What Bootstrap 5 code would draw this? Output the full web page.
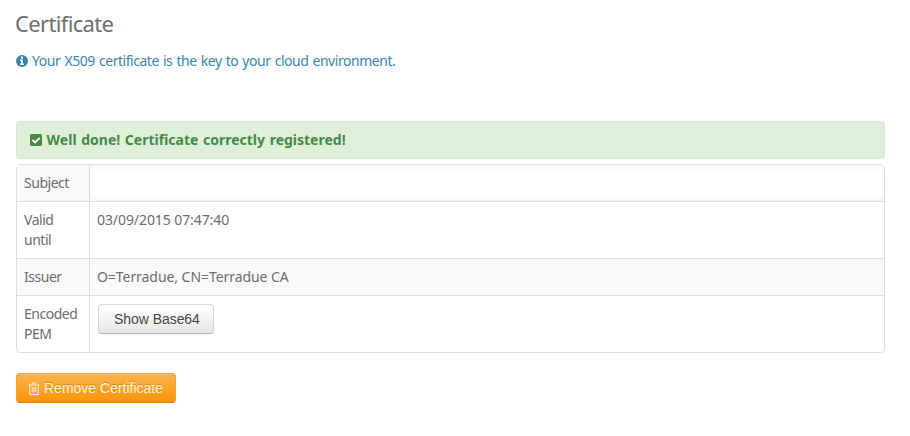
<!DOCTYPE html>
<html lang="en">
<head>
<meta charset="utf-8">
<meta name="viewport" content="width=device-width, initial-scale=1">
<title>Certificate</title>
<link href="https://cdn.jsdelivr.net/npm/bootstrap@5.3.0/dist/css/bootstrap.min.css" rel="stylesheet">
<style>
body{font:14px/20px "Noto Sans",sans-serif;color:#6c6c6c;background:#fff;overflow:hidden}
.page{width:869px;margin-left:16px;padding-top:8px}
.page h3{font-size:22px;line-height:30px;font-weight:400;color:#6e6e6e;letter-spacing:-.65px;margin-left:-1px}
.hint{color:#3a87ad;margin-top:13px;letter-spacing:-.46px;word-spacing:.9px}
.hint svg,.notice svg{width:12px;height:12px;flex:none}
.hint svg{margin-left:-.5px}
.hint span,.notice span{margin-left:.6px}
.notice{margin-top:50px;height:38px;padding:0 13px;background:#dff0d8;border:1px solid #d6e9c6;color:#468847;border-radius:4px;font-weight:700;word-spacing:1px}
.cert{margin-top:5px;border:1px solid #ddd;border-radius:4px;border-collapse:separate;border-spacing:0;table-layout:fixed;--bs-table-bg:transparent;color:inherit}
.cert>tbody>tr>*{padding:8px 7px;border:0;border-top:1px solid #ddd;font-weight:400;color:#6c6c6c;line-height:20px}
.cert>tbody>tr:first-child>*{border-top:0}
.cert>tbody>tr>td{border-left:1px solid #ddd;letter-spacing:-.08px}
.cert>tbody>tr>th{letter-spacing:-.48px}
.cert>tbody>tr>.issuer{letter-spacing:-.06px}
.cert th{width:72px}
.cert .shade>*{background:#f9f9f9}
.cert .redacted{background:linear-gradient(#fff,#fff) 1px 4px/calc(100% - 2px) 28px no-repeat #f9f9f9}
.btn-old{font:14px/20px "Liberation Sans",Arial,sans-serif;height:30px;border-radius:4px;box-shadow:inset 0 1px 0 rgba(255,255,255,.2),0 1px 2px rgba(0,0,0,.05)}
.btn-show{color:#444;margin-left:1px;padding:4px 13px 4px 15px;letter-spacing:-.05px;background:linear-gradient(#fff,#e6e6e6);border:1px solid #ccc;border-color:#dcdcdc #d4d4d4 #b3b3b3;text-shadow:0 1px 1px rgba(255,255,255,.75)}
.btn-remove{color:#fff3df;background:linear-gradient(#fbb450,#f89406);border:1px solid #f0a03c;border-bottom-color:#d68519;text-shadow:0 -1px 0 rgba(0,0,0,.2);margin-top:20px;padding:4px 12px 4px 11px}
.btn-remove svg{margin-right:4px}
</style>
</head>
<body>
<main class="page">
<h3 class="mb-0"><span>Certificate</span></h3>
<div class="hint d-flex align-items-center">
<svg viewBox="0 0 12 12" class="me-1"><circle cx="6" cy="6" r="6" fill="#3a87ad"/><path d="M5 1.500h2v2H5zM4 4.500h3v4h1V10H4V8.500h1V6H4z" fill="#fff"/></svg>
<span>Your X509 certificate is the key to your cloud environment.</span>
</div>
<div class="notice d-flex align-items-center">
<svg viewBox="0 0 12 12" class="me-1"><rect width="12" height="12" rx="2" fill="#468847"/><path d="M2.500 6l2.500 2.500L9.700 3.800" fill="none" stroke="#fff" stroke-width="1.900"/></svg>
<span>Well done! Certificate correctly registered!</span>
</div>
<table class="table cert mb-0">
<tbody>
<tr class="shade"><th scope="row">Subject</th><td class="redacted"></td></tr>
<tr><th scope="row">Valid until</th><td><span>03/09/2015 07:47:40</span></td></tr>
<tr class="shade"><th scope="row">Issuer</th><td class="issuer"><span>O=Terradue, CN=Terradue CA</span></td></tr>
<tr><th scope="row">Encoded PEM</th><td><button type="button" class="btn btn-old btn-show d-block">Show Base64</button></td></tr>
</tbody>
</table>
<button type="button" class="btn btn-old btn-remove d-flex align-items-center">
<svg width="12" height="13" viewBox="0 0 12 13" fill="none" stroke="#fff3df"><path d="M.5 3h11M4 2.800V1h4v1.800M1.700 3v9.500h8.600V3M4.200 5v5.500M6 5v5.500M7.800 5v5.500"/></svg>
<span>Remove Certificate</span>
</button>
</main>
<script src="https://cdn.jsdelivr.net/npm/bootstrap@5.3.0/dist/js/bootstrap.bundle.min.js"></script>
</body>
</html>
